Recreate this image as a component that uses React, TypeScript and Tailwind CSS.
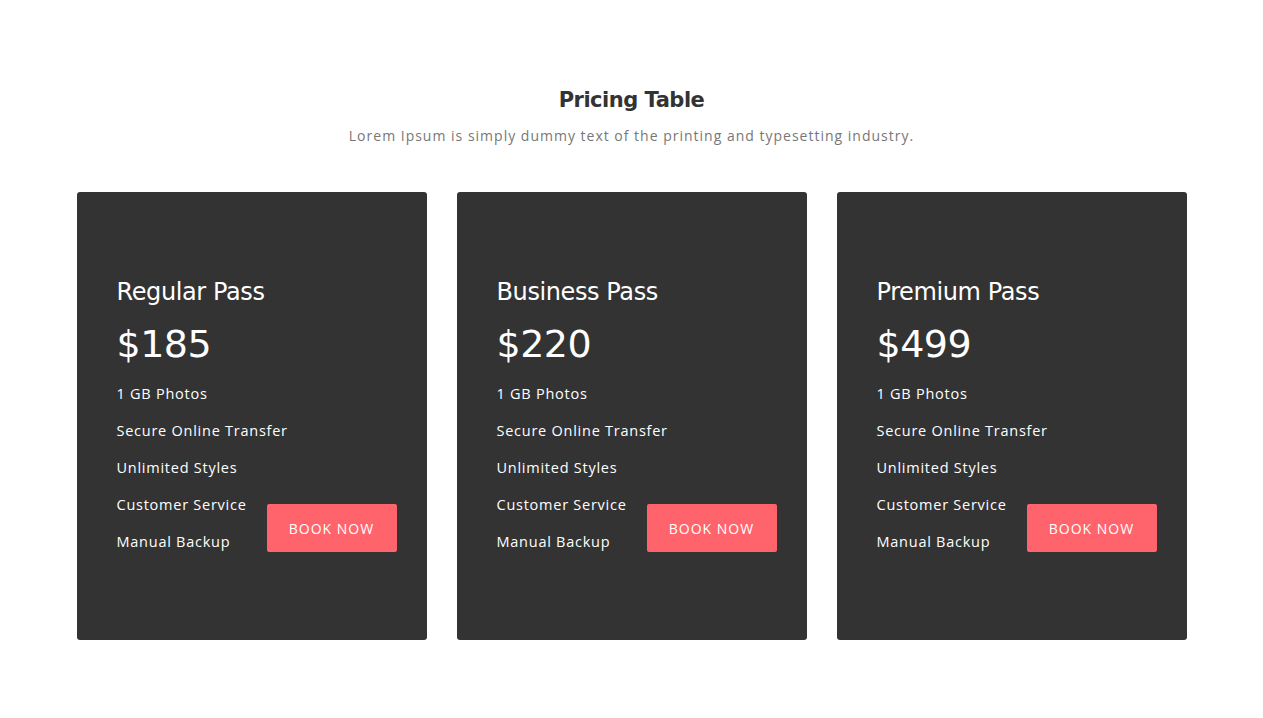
const PLANS = [
  { name: 'Regular Pass', price: '$185' },
  { name: 'Business Pass', price: '$220' },
  { name: 'Premium Pass', price: '$499' },
];

const FEATURES = ['1 GB Photos', 'Secure Online Transfer', 'Unlimited Styles', 'Customer Service', 'Manual Backup'];

export default function App() {
  return (
    <div className="min-h-screen bg-white pt-[84px] font-['Open_Sans',sans-serif]">
      {/* Header */}
      <div className="text-center">
        <h1 className="font-['DejaVu_Sans',sans-serif] text-[21px] font-bold leading-[32px] tracking-[-0.5px] text-[#333]">
          Pricing Table
        </h1>
        <p className="mt-[8px] text-[14px] leading-[24px] tracking-[1px] text-[#777]">
          Lorem Ipsum is simply dummy text of the printing and typesetting industry.
        </p>
      </div>

      {/* Cards */}
      <div className="mx-auto mt-[44px] grid w-[1110px] grid-cols-3 gap-[30px]">
        {PLANS.map((plan) => (
          <div key={plan.name} className="h-[448px] rounded-[3px] bg-[#333333] pl-[40px] pr-[30px] pt-[85px]">
            <h2 className="font-['DejaVu_Sans',sans-serif] text-[24px] leading-[30px] tracking-[-0.4px] text-white">
              {plan.name}
            </h2>
            <p className="mt-[13px] font-['DejaVu_Sans',sans-serif] text-[38px] leading-[48px] tracking-[-0.5px] text-white">
              {plan.price}
            </p>
            <div className="mt-[7px] grid">
              <ul className="col-start-1 row-start-1 whitespace-nowrap text-[14.5px] leading-[37px] tracking-[0.75px] text-white">
                {FEATURES.map((f) => (
                  <li key={f}>{f}</li>
                ))}
              </ul>
              <button className="col-start-1 row-start-1 mb-[8px] h-[48px] w-[130px] self-end justify-self-end rounded-[2px] bg-[#ff636c] text-[14px] uppercase tracking-[1px] text-white">
                Book Now
              </button>
            </div>
          </div>
        ))}
      </div>
    </div>
  );
}
